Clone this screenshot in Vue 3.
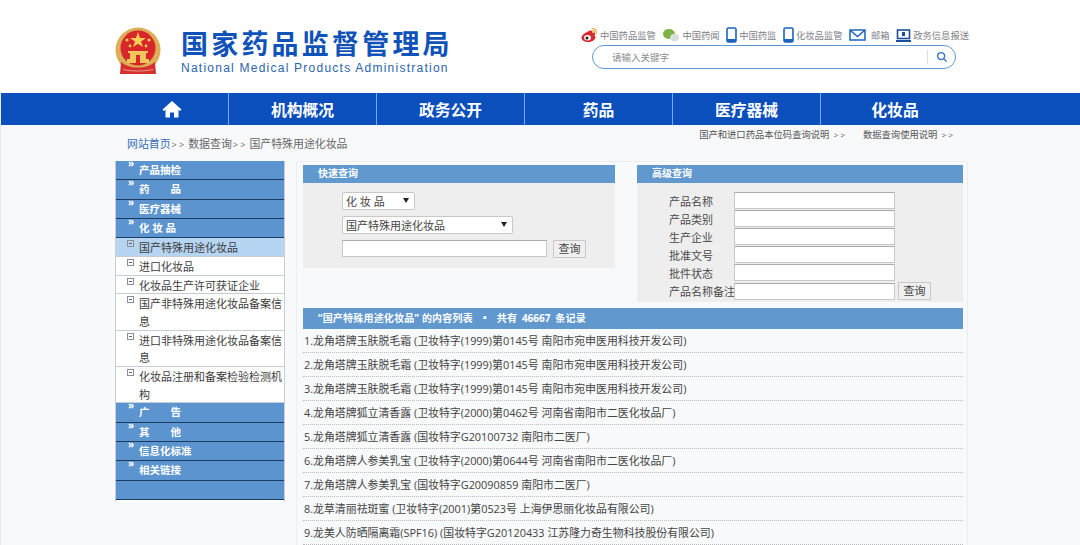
<script setup>
const navs = ['机构概况', '政务公开', '药品', '医疗器械', '化妆品']

const sideTop = ['产品抽检', '药　　品', '医疗器械', '化 妆 品']
const sideItems = [
  { name: '国产特殊用途化妆品', active: true },
  { name: '进口化妆品' },
  { name: '化妆品生产许可获证企业' },
  { name: '国产非特殊用途化妆品备案信息' },
  { name: '进口非特殊用途化妆品备案信息' },
  { name: '化妆品注册和备案检验检测机构' }
]
const sideBottom = ['广　　告', '其　　他', '信息化标准', '相关链接', '']

const advFields = ['产品名称', '产品类别', '生产企业', '批准文号', '批件状态']

const rows = [
  '1.龙角塔牌玉肤脱毛霜 (卫妆特字(1999)第0145号 南阳市宛申医用科技开发公司)',
  '2.龙角塔牌玉肤脱毛霜 (卫妆特字(1999)第0145号 南阳市宛申医用科技开发公司)',
  '3.龙角塔牌玉肤脱毛霜 (卫妆特字(1999)第0145号 南阳市宛申医用科技开发公司)',
  '4.龙角塔牌狐立清香露 (卫妆特字(2000)第0462号 河南省南阳市二医化妆品厂)',
  '5.龙角塔牌狐立清香露 (国妆特字G20100732 南阳市二医厂)',
  '6.龙角塔牌人参美乳宝 (卫妆特字(2000)第0644号 河南省南阳市二医化妆品厂)',
  '7.龙角塔牌人参美乳宝 (国妆特字G20090859 南阳市二医厂)',
  '8.龙草清丽祛斑蜜 (卫妆特字(2001)第0523号 上海伊思丽化妆品有限公司)',
  '9.龙美人防晒隔离霜(SPF16) (国妆特字G20120433 江苏隆力奇生物科技股份有限公司)'
]
</script>

<template>
<div class="page">
  <header class="header">
    <div class="logo">
      <svg class="emblem" width="46" height="48" viewBox="0 0 46 48">
        <circle cx="23" cy="23" r="22.500" fill="#dcae55"/>
        <circle cx="23" cy="21" r="17.500" fill="#d8262a"/>
        <polygon points="23,5 25,11 31,11 26,14.500 28,20 23,16.800 18,20 20,14.500 15,11 21,11" fill="#f6cf55"/>
        <circle cx="12" cy="13" r="1.600" fill="#f6cf55"/>
        <circle cx="34" cy="13" r="1.600" fill="#f6cf55"/>
        <circle cx="15" cy="19" r="1.400" fill="#f6cf55"/>
        <circle cx="31" cy="19" r="1.400" fill="#f6cf55"/>
        <path d="M13 24h20v2h-2v6h3v4H12v-4h3v-6h-2z" fill="#f2c75a"/>
        <path d="M21 28h4v8h-4z" fill="#d8262a"/>
        <path d="M6 35c4 3.500 10 5.500 17 5.500S36 38.500 40 35l1 12H5z" fill="#d6302f"/>
        <path d="M8 42.500c4 1 10 1.500 15 1.500s11-.5 15-1.500" fill="none" stroke="#e9b7a4" stroke-width="0.800"/>
      </svg>
      <div class="logo-text">
        <div class="logo-cn">国家药品监督管理局</div>
        <div class="logo-en">National Medical Products Administration</div>
      </div>
    </div>
    <div class="tools">
      <div class="tool-links">
        <span class="tool">
          <svg width="18" height="16" viewBox="0 0 18 16">
            <path d="M7 5c2-1.500 4-2 4.800-1.200.5.500.3 1.200.1 1.900 1.500-.5 3-.4 3.300.7.200.8-.2 1.500-1 2.100 1 .4 1.300 1 1.300 1.700 0 2.300-3.200 4.800-7.300 4.800C4.500 15 1.500 13.300 1.500 10.700 1.500 9 3.500 6.500 7 5z" fill="#d9282f"/>
            <ellipse cx="7.500" cy="10.800" rx="3.400" ry="2.700" fill="#fff"/>
            <circle cx="7" cy="11" r="1.500" fill="#222"/>
            <path d="M12 1.500c2.500-.3 4.800 2 4.300 4.700M12.300 3.700c1.200-.2 2.400 1 2.100 2.300" fill="none" stroke="#f09a1f" stroke-width="1.100" stroke-linecap="round"/>
          </svg>
          中国药品监管
        </span>
        <span class="tool">
          <svg width="18" height="14" viewBox="0 0 18 14">
            <ellipse cx="7" cy="6" rx="6" ry="5" fill="#7cb342"/>
            <ellipse cx="12.500" cy="9.500" rx="4.500" ry="3.800" fill="#d8dde0"/>
          </svg>
          中国药闻
        </span>
        <span class="tool">
          <svg width="11" height="16" viewBox="0 0 11 16">
            <rect x="1" y="1" width="9" height="14" rx="1.500" fill="#fff" stroke="#1a63bf" stroke-width="1.600"/>
            <rect x="1" y="12" width="9" height="3" fill="#1a63bf"/>
          </svg>
          中国药监
        </span>
        <span class="tool">
          <svg width="11" height="16" viewBox="0 0 11 16">
            <rect x="1" y="1" width="9" height="14" rx="1.500" fill="#fff" stroke="#1a63bf" stroke-width="1.600"/>
            <rect x="1" y="12" width="9" height="3" fill="#1a63bf"/>
          </svg>
          化妆品监管
        </span>
        <span class="tool">
          <svg width="17" height="12" viewBox="0 0 17 12">
            <rect x="1" y="1" width="15" height="10" fill="#fff" stroke="#1a63bf" stroke-width="1.500"/>
            <path d="M1.500 1.500l7 6 7-6" fill="none" stroke="#1a63bf" stroke-width="1.500"/>
          </svg>
          <span class="mail-text">邮箱</span>
        </span>
        <span class="tool">
          <svg width="15" height="13" viewBox="0 0 15 13">
            <rect x="1.500" y="1" width="12" height="8.500" fill="#fff" stroke="#1a4f9f" stroke-width="1.600"/>
            <rect x="0" y="11" width="15" height="2" fill="#1a4f9f"/>
            <rect x="6" y="3" width="3" height="4" fill="#1a4f9f"/>
          </svg>
          政务信息报送
        </span>
      </div>
      <div class="search">
        <span class="search-hint">请输入关键字</span>
        <div class="search-btn">
          <svg width="12" height="12" viewBox="0 0 13 13">
            <circle cx="5.500" cy="5.500" r="3.800" fill="none" stroke="#2f74c4" stroke-width="1.500"/>
            <path d="M8.500 8.500l3 3" stroke="#2f74c4" stroke-width="1.500"/>
          </svg>
        </div>
      </div>
    </div>
  </header>

  <nav class="nav">
    <div class="nav-inner">
      <div class="nav-cell home">
        <svg width="20" height="18" viewBox="0 0 20 18">
          <path d="M10 1L0.500 9.500 2 11l1.500-1.300V17.500h4.500v-5h4v5h4.500V9.700L18 11l1.500-1.500z" fill="#fff"/>
        </svg>
      </div>
      <div v-for="item in navs" :key="item" class="nav-cell">{{ item }}</div>
    </div>
  </nav>

  <div class="crumb-row">
    <div class="crumb"><span class="crumb-link">网站首页</span><span class="gt">&gt; &gt;</span>数据查询<span class="gt">&gt; &gt;</span>国产特殊用途化妆品</div>
    <div class="notes">
      <span>国产和进口药品本位码查询说明 <b class="gt2">&gt; &gt;</b></span>
      <span>数据查询使用说明 <b class="gt2">&gt; &gt;</b></span>
    </div>
  </div>

  <div class="content">
    <aside class="side">
      <div v-for="item in sideTop" :key="item" class="side-head"><i>»</i>{{ item }}</div>
      <div v-for="item in sideItems" :key="item.name" class="side-item" :class="{ active: item.active }">
        <span class="box"></span>
        <span class="side-name">{{ item.name }}</span>
      </div>
      <div v-for="item in sideBottom" :key="item" class="side-head"><i v-if="item">»</i>{{ item }}</div>
    </aside>

    <main class="main">
      <div class="forms">
        <section class="quick">
          <div class="bar">快速查询</div>
          <div class="quick-body">
            <div class="select short"><select><option>化 妆 品</option></select></div>
            <div class="select long"><select><option>国产特殊用途化妆品</option></select></div>
            <div class="quick-line">
              <input class="text quick-input" type="text">
              <button class="btn">查询</button>
            </div>
          </div>
        </section>
        <section class="adv">
          <div class="bar">高级查询</div>
          <div class="adv-body">
            <div v-for="f in advFields" :key="f" class="adv-line">
              <label>{{ f }}</label>
              <input class="text adv-input" type="text">
            </div>
            <div class="adv-line">
              <label>产品名称备注</label>
              <input class="text adv-input" type="text">
              <button class="btn">查询</button>
            </div>
          </div>
        </section>
      </div>

      <div class="list-bar">“国产特殊用途化妆品” 的内容列表 <span class="dot">▪</span> 共有 <span class="num">46667</span> 条记录</div>
      <div v-for="row in rows" :key="row" class="row">{{ row }}</div>
    </main>
  </div>
</div>
</template>

<style>
html, body {
  margin: 0;
  background: #f7f9fb;
  overflow: hidden;
}
</style>

<style scoped>
* {
  box-sizing: border-box;
  font-family: "Open Sans", "Noto Sans CJK SC", sans-serif;
}

.page {
  width: 1080px;
  height: 545px;
  overflow: hidden;
  background: #f7f9fb;
  box-shadow: inset 1px 0 #e6ebf3;
  color: #444;
  font-size: 11px;
}

.header {
  display: flex;
  justify-content: space-between;
  height: 93px;
  padding: 27px 111px 0 115px;
  background: #fff;
}

.logo {
  display: flex;
  gap: 20px;
}

.logo-text {
  margin-top: -2px;
}

.logo-cn {
  margin-top: 1px;
  color: #0f52b8;
  font-size: 27px;
  font-weight: 700;
  line-height: 36px;
  letter-spacing: 3.200px;
  white-space: nowrap;
}

.logo-en {
  color: #2b64ac;
  font-family: "Liberation Sans", sans-serif;
  font-size: 12px;
  line-height: 13px;
  letter-spacing: 1.240px;
  white-space: nowrap;
}

.tools {
  width: 389px;
  margin-top: -1px;
}

.tool-links {
  display: flex;
  align-items: center;
  justify-content: space-between;
  height: 18px;
}

.tool {
  display: flex;
  align-items: center;
  gap: 2px;
  color: #7d8186;
  font-size: 9.300px;
  white-space: nowrap;
}

.mail-text {
  margin-left: 3px;
}

.search {
  display: flex;
  align-items: center;
  justify-content: space-between;
  width: 364px;
  height: 24px;
  margin: 1px 0 0 12px;
  padding: 0 0 0 19px;
  background: #fff;
  border: 1px solid #5c9ad6;
  border-radius: 12px;
}

.search-hint {
  color: #8a8d91;
  font-size: 9.500px;
}

.search-btn {
  display: flex;
  align-items: center;
  justify-content: center;
  width: 28px;
  height: 14px;
  border-left: 1px solid #ddd;
}

.nav {
  height: 32px;
  margin-left: 1px;
  background: #0a4fbc;
}

.nav-inner {
  display: flex;
  margin-left: 115px;
}

.nav-cell {
  display: flex;
  align-items: center;
  justify-content: center;
  width: 148px;
  height: 32px;
  color: #fff;
  font-size: 15.800px;
  font-weight: 700;
  border-right: 1px solid #7aa5e6;
}

.nav-cell.home {
  width: 113px;
}

.nav-cell:last-child {
  border-right: 0;
}

.crumb-row {
  display: flex;
  justify-content: space-between;
  height: 36px;
  padding: 0 127px 0 127px;
}

.crumb {
  padding-top: 11px;
  color: #666;
  font-size: 10.900px;
  line-height: 16px;
}

.crumb-link {
  color: #3a6db4;
}

.gt {
  margin: 0 4px 0 1px;
  font-size: 9px;
}

.notes {
  display: flex;
  gap: 18px;
  padding-top: 3px;
  color: #555;
  font-size: 9.300px;
  line-height: 14px;
}

.gt2 {
  margin-left: 2px;
  font-weight: 400;
  font-size: 8px;
}

.content {
  display: flex;
  gap: 11px;
  padding-left: 115px;
}

.side {
  width: 170px;
  height: 341px;
  border: 1px solid #c9ced4;
  border-width: 0 1px 0 1px;
  background: #fff;
}

.side-head {
  position: relative;
  height: 19.350px;
  padding-left: 23px;
  color: #fff;
  font-size: 10.500px;
  font-weight: 700;
  line-height: 18px;
  background: #5b94cf;
  border-bottom: 1px solid #1d3d60;
}

.side-head i {
  position: absolute;
  left: 12px;
  top: -4px;
  font-style: normal;
  font-size: 10px;
  line-height: 12px;
}

.side-item {
  display: flex;
  gap: 5px;
  padding-left: 11px;
  color: #3c3c3c;
  font-size: 11px;
  line-height: 17.660px;
  border-bottom: 1px solid #c7ccd2;
}

.side-item.active {
  background: #b6d5f3;
}

.box {
  position: relative;
  flex: none;
  width: 7px;
  height: 7px;
  margin-top: 2px;
  border: 1px solid #8b9096;
}

.box::after {
  content: "";
  position: absolute;
  left: 1px;
  top: 2px;
  width: 3px;
  height: 1px;
  background: #666;
}

.side-name {
  width: 143px;
  padding-top: 1px;
  margin-bottom: -1px;
}

.main {
  width: 672px;
  padding: 3px 4px 0 6px;
  border: 1px solid #eceef0;
  border-bottom: 0;
}

.forms {
  display: flex;
  gap: 22px;
  height: 143px;
}

.quick {
  width: 312px;
}

.adv {
  width: 326px;
}

.bar {
  height: 18px;
  padding-left: 15px;
  color: #fff;
  font-size: 10px;
  font-weight: 700;
  line-height: 16px;
  background: #6198ce;
}

.quick-body {
  display: flex;
  flex-direction: column;
  align-items: flex-start;
  gap: 6px;
  height: 85px;
  padding: 9px 0 0 39px;
  background: #eeeeee;
}

.select {
  position: relative;
}

.select select {
  display: block;
  width: 100%;
  height: 18px;
  padding: 0 3px;
  color: #444;
  font-size: 11px;
  background: #fff;
  border: 1px solid #c8c8c8;
  border-radius: 2px;
  appearance: none;
}

.select::after {
  content: "";
  position: absolute;
  right: 6px;
  top: 6px;
  border-left: 3px solid transparent;
  border-right: 3px solid transparent;
  border-top: 5px solid #222;
}

.short {
  width: 73px;
}

.long {
  width: 171px;
}

.quick-line {
  display: flex;
  gap: 6px;
}

.text {
  display: block;
  height: 17px;
  padding: 0;
  background: #fff;
  border: 1px solid #c8c8c8;
  border-top-color: #aaa;
}

.quick-input {
  width: 205px;
}

.btn {
  width: 33px;
  height: 18px;
  padding: 0;
  color: #444;
  font-size: 11px;
  line-height: 16px;
  background: #efefef;
  border: 1px solid #c8c8c8;
}

.adv-body {
  display: flex;
  flex-direction: column;
  gap: 1px;
  height: 119px;
  padding-top: 9px;
  background: #eeeeee;
}

.adv-line {
  display: flex;
  align-items: center;
  height: 17.100px;
}

.adv-line label {
  width: 97px;
  padding-left: 32px;
  color: #4a4a4a;
  font-size: 11px;
  white-space: nowrap;
}

.adv-input {
  width: 161px;
}

.adv-line .btn {
  margin-left: 3px;
}

.list-bar {
  height: 21px;
  padding-left: 15px;
  color: #fff;
  font-size: 10px;
  font-weight: 700;
  line-height: 20px;
  letter-spacing: 0.200px;
  background: #6198ce;
}

.dot {
  margin: 0 4px;
}

.num {
  margin: 0 2px;
  letter-spacing: 0;
}

.row {
  height: 24px;
  padding-left: 1px;
  color: #444;
  font-size: 10.900px;
  line-height: 24px;
  border-bottom: 1px dotted #bbb;
  white-space: nowrap;
}
</style>
